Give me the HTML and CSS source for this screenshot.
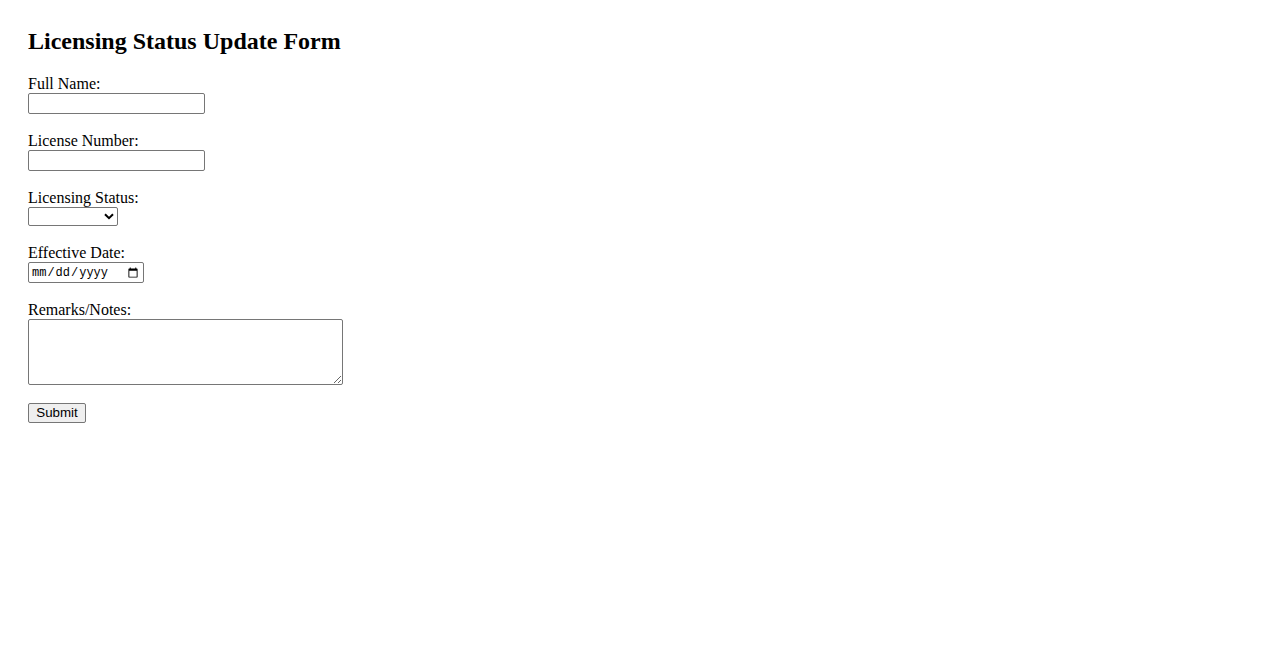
FILE: index.html
```html
<!DOCTYPE html>
<html lang="en">
<head>
<meta charset="utf-8">
<title>Licensing Status Update Form</title>
<link rel="stylesheet" href="styles.css">
</head>
<body>
<main class="page">
  <h1 class="title">Licensing Status Update Form</h1>
  <form class="form">
    <div class="field">
      <label class="label" for="fullName">Full Name:</label>
      <input class="text-input" type="text" id="fullName">
    </div>
    <div class="field">
      <label class="label" for="licenseNumber">License Number:</label>
      <input class="text-input" type="text" id="licenseNumber">
    </div>
    <div class="field">
      <label class="label" for="status">Licensing Status:</label>
      <div class="select-wrap">
        <select class="select" id="status">
          <option value=""></option>
          <option value="active">Active</option>
          <option value="suspended">Suspended</option>
          <option value="revoked">Revoked</option>
        </select>
        <svg class="chevron" width="10" height="7" viewBox="0 0 10 7" aria-hidden="true">
          <path d="M1 1.2 L5 5.2 L9 1.2" fill="none" stroke="#000" stroke-width="2"/>
        </svg>
      </div>
    </div>
    <div class="field">
      <label class="label" for="effectiveDate">Effective Date:</label>
      <input class="date-input" type="date" id="effectiveDate">
    </div>
    <div class="field">
      <label class="label" for="remarks">Remarks/Notes:</label>
      <textarea class="textarea" id="remarks"></textarea>
    </div>
    <button class="submit" type="submit">Submit</button>
  </form>
</main>
</body>
</html>
```

FILE: styles.css
```css
html, body {
  margin: 0;
  padding: 0;
  background: #ffffff;
}

body {
  font-family: "Liberation Serif", "Times New Roman", serif;
  font-size: 16px;
  color: #000000;
}

.page {
  padding: 28px;
}

.title {
  font-size: 24px;
  font-weight: bold;
  margin: 0 0 20px 0;
}

.form {
  display: flex;
  flex-direction: column;
  align-items: flex-start;
}

.field {
  display: flex;
  flex-direction: column;
  align-items: flex-start;
  margin-bottom: 18px;
}

.label {
  display: block;
  height: 18px;
  line-height: normal;
}

.text-input,
.date-input,
.select,
.textarea,
.submit {
  box-sizing: border-box;
  margin: 0;
  border: 1px solid #767676;
  border-radius: 2px;
  background-color: #ffffff;
  color: #000000;
}

.text-input {
  width: 177px;
  height: 21px;
  padding: 1px 2px;
  font: 13.333px "Liberation Sans", Arial, sans-serif;
}

.select-wrap {
  position: relative;
  width: 90px;
  height: 19px;
}

.select {
  display: block;
  width: 90px;
  height: 19px;
  padding: 0 16px 0 2px;
  -webkit-appearance: none;
  appearance: none;
  font: 13.333px "Liberation Sans", Arial, sans-serif;
}

.chevron {
  position: absolute;
  right: 4px;
  top: 6px;
  pointer-events: none;
}

.date-input {
  width: 116px;
  height: 21px;
  padding: 1px 2px;
  font: 12px "Liberation Mono", "Courier New", monospace;
}

.textarea {
  display: block;
  width: 315px;
  height: 66px;
  padding: 2px;
  resize: both;
  font: 13.333px "Liberation Mono", monospace;
}

.submit {
  width: 58px;
  height: 20px;
  padding: 1px 6px;
  background-color: #efefef;
  font: 13.333px "Liberation Sans", Arial, sans-serif;
  line-height: 16px;
}
```
